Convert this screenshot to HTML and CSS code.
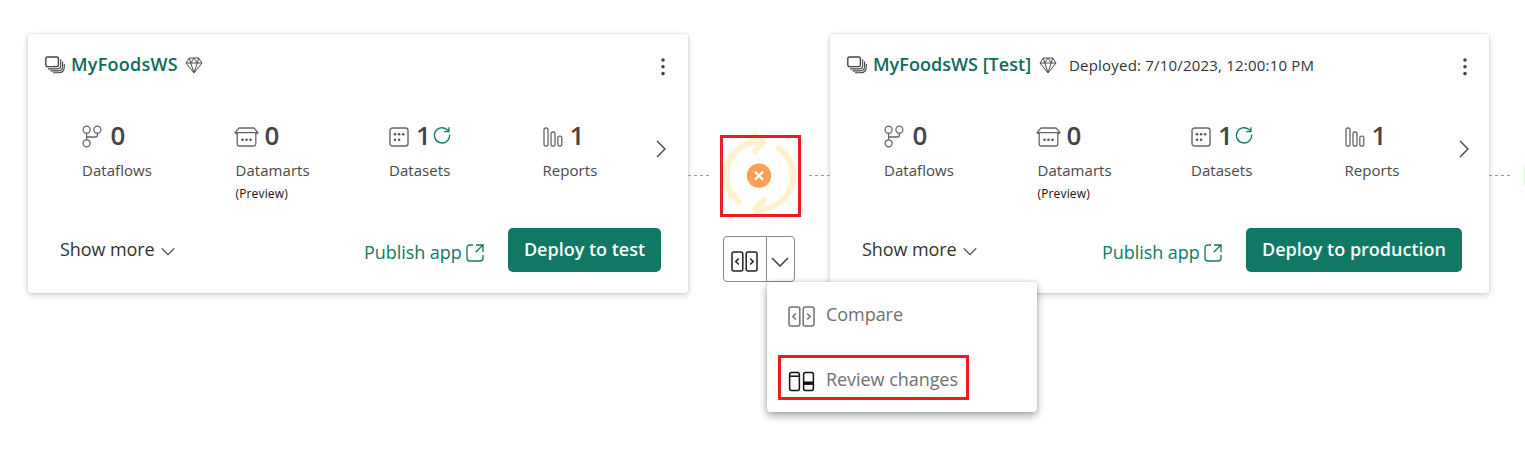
FILE: index.html
```html
<!DOCTYPE html>
<html lang="en">
<head>
<meta charset="utf-8">
<title>Deployment pipeline</title>
<link rel="stylesheet" href="styles.css">
</head>
<body>
<svg class="sprite" aria-hidden="true">
  <symbol id="i-stack" viewBox="0 0 20 18"><g fill="none" stroke="#444" stroke-width="1.4"><rect x=".8" y="1" width="12.6" height="9.6" rx="1.5"/><path d="M3 12.9h9.4q3.3 0 3.3-3.3V3.300M5.400 14.900h7.600q4.600 0 4.600-4.600V5.600M8 16.800h5.400q5.900 0 5.900-6V8" stroke-width="1.100"/></g></symbol>
  <symbol id="i-gem" viewBox="0 0 18 17"><path d="M4.400 1h9.200L17 6 9 16 1 6zM1 6h16M9 1.200 5.700 6 9 15.500 12.300 6zM4.400 1 5.700 6M13.600 1 12.300 6" fill="none" stroke="#4c4c4c" stroke-width="1" stroke-linejoin="round"/></symbol>
  <symbol id="i-more" viewBox="0 0 6 20"><g fill="#444"><circle cx="3" cy="3" r="1.8"/><circle cx="3" cy="9.8" r="1.8"/><circle cx="3" cy="16.6" r="1.8"/></g></symbol>
  <symbol id="i-flow" viewBox="0 0 20 23"><g fill="none" stroke="#666" stroke-width="1.3"><circle cx="4.6" cy="4.7" r="3.5"/><circle cx="15.4" cy="4.7" r="3.5"/><circle cx="4.6" cy="18.3" r="3.5"/><path d="M4.6 8.2v6.6M4.6 12h8.8q2 0 2-2V8.2"/></g></symbol>
  <symbol id="i-mart" viewBox="0 0 25 20"><path d="M5 1h15l4 4.6H1zM3.2 5.8v11q0 2.2 2.2 2.2h14.2q2.2 0 2.2-2.2v-11M1 5.6q.4 1.2 2.2 1.2M24 5.6q-.4 1.2-2.2 1.2" fill="none" stroke="#666" stroke-width="1.3" stroke-linejoin="round"/><g fill="#555"><circle cx="8.5" cy="12.8" r="1.3"/><circle cx="12.5" cy="12.8" r="1.3"/><circle cx="16.5" cy="12.8" r="1.3"/></g></symbol>
  <symbol id="i-set" viewBox="0 0 20 20"><rect x="1" y="1" width="18" height="18" rx="2.5" fill="none" stroke="#666" stroke-width="1.4"/><g fill="#555"><circle cx="6" cy="7.3" r="1.3"/><circle cx="10.1" cy="7.3" r="1.3"/><circle cx="14.2" cy="7.3" r="1.3"/><circle cx="6" cy="12.8" r="1.3"/><circle cx="10.1" cy="12.8" r="1.3"/></g></symbol>
  <symbol id="i-bars" viewBox="0 0 20 20"><g fill="none" stroke="#666" stroke-width="1.3"><rect x="1" y="1" width="4" height="18" rx="1.6"/><rect x="8" y="5" width="4" height="14" rx="1.6"/><rect x="14.8" y="9.2" width="4" height="9.8" rx="1.6"/></g></symbol>
  <symbol id="i-refresh" viewBox="0 0 18 18"><path d="M16.6 8.6a7.6 7.6 0 1 1-2.6-5L16 5.4M15.9 1.2v4.5h-4.7" fill="none" stroke="#117865" stroke-width="1.3"/></symbol>
  <symbol id="i-right" viewBox="0 0 10 18"><path d="M1 1l8 8-8 8" fill="none" stroke="#444" stroke-width="1.4"/></symbol>
  <symbol id="i-down" viewBox="0 0 18 10"><path d="M1 1l8 8 8-8" fill="none" stroke="#444" stroke-width="1.6"/></symbol>
  <symbol id="i-open" viewBox="0 0 18 18"><path d="M7 1H4Q1 1 1 4v10q0 3 3 3h10q3 0 3-3v-3M10 1h7v7M17 1l-7.3 7.3" fill="none" stroke="#117865" stroke-width="1.3"/></symbol>
  <symbol id="i-compare" viewBox="0 0 27 21"><g fill="none" stroke="currentColor" stroke-width="1.5"><rect x="1" y="1" width="10.8" height="19" rx="2"/><rect x="15.2" y="1" width="10.8" height="19" rx="2"/><path d="M7.8 7.4 4.8 10.5l3 3.1M19.2 7.4l3 3.1-3 3.1"/></g></symbol>
  <symbol id="i-review" viewBox="0 0 27 21"><g fill="none" stroke="#111" stroke-width="1.5"><rect x="1.6" y="1.6" width="9.8" height="17.8" rx="2"/><rect x="15.6" y="1.6" width="9.8" height="17.8" rx="2"/><path d="M1.6 5.2h9.8"/><path d="M15.6 12.2h9.8" stroke-width="3.4"/></g></symbol>
</svg>

<main class="pipeline">
  <section class="card">
    <header class="card-head">
      <svg class="stack"><use href="#i-stack"/></svg>
      <h2 class="name name-short">MyFoodsWS</h2>
      <svg class="gem"><use href="#i-gem"/></svg>
      <svg class="more"><use href="#i-more"/></svg>
    </header>
    <div class="stats">
      <div class="stat"><div class="count"><svg class="flow"><use href="#i-flow"/></svg><b>0</b></div><p class="label">Dataflows</p></div>
      <div class="stat"><div class="count"><svg class="mart"><use href="#i-mart"/></svg><b>0</b></div><p class="label">Datamarts</p><small class="note">(Preview)</small></div>
      <div class="stat"><div class="count"><svg class="sq"><use href="#i-set"/></svg><b class="one">1</b><svg class="refresh"><use href="#i-refresh"/></svg></div><p class="label">Datasets</p></div>
      <div class="stat"><div class="count"><svg class="sq"><use href="#i-bars"/></svg><b class="one">1</b></div><p class="label">Reports</p></div>
      <svg class="next"><use href="#i-right"/></svg>
    </div>
    <footer class="card-foot">
      <span class="show">Show more</span><svg class="show-icon"><use href="#i-down"/></svg>
      <a class="publish">Publish app</a><svg class="open"><use href="#i-open"/></svg>
      <button class="deploy deploy-test">Deploy to test</button>
    </footer>
  </section>

  <div class="between">
    <div class="sync-row">
      <span class="dash"></span>
      <div class="sync">
        <svg class="sync-icon" viewBox="-50 -44 100 88">
          <g fill="none" stroke="#fff2cc" stroke-width="6" stroke-linecap="round" stroke-linejoin="round">
            <path d="M-20 27A33.5 33.5 0 0 1 4-33M-4-40.500 4-33-4-24"/>
            <path d="M20-26.500A33.5 33.5 0 0 1-4 34M4.500 26-4 34 4.500 40.500"/>
          </g>
          <circle r="12.200" cy=".7" fill="#ff9f57"/>
          <path d="M-4-3.300l8 8m0-8l-8 8" stroke="#fff" stroke-width="2.200"/>
        </svg>
        <span class="mark mark-sync"></span>
      </div>
      <span class="dash"></span>
    </div>
    <div class="split">
      <span class="split-main"><svg class="pair"><use href="#i-compare"/></svg></span>
      <span class="split-menu"><svg class="split-down"><use href="#i-down"/></svg></span>
      <div class="menu">
        <div class="item"><svg class="pair"><use href="#i-compare"/></svg><span>Compare</span></div>
        <div class="item item-review"><svg class="pair"><use href="#i-review"/></svg><span>Review changes</span></div>
      </div>
    </div>
  </div>

  <section class="card card-test">
    <header class="card-head">
      <svg class="stack"><use href="#i-stack"/></svg>
      <h2 class="name name-long">MyFoodsWS [Test]</h2>
      <svg class="gem"><use href="#i-gem"/></svg>
      <span class="date">Deployed: 7/10/2023, 12:00:10 PM</span>
      <svg class="more"><use href="#i-more"/></svg>
    </header>
    <div class="stats">
      <div class="stat"><div class="count"><svg class="flow"><use href="#i-flow"/></svg><b>0</b></div><p class="label">Dataflows</p></div>
      <div class="stat"><div class="count"><svg class="mart"><use href="#i-mart"/></svg><b>0</b></div><p class="label">Datamarts</p><small class="note">(Preview)</small></div>
      <div class="stat"><div class="count"><svg class="sq"><use href="#i-set"/></svg><b class="one">1</b><svg class="refresh"><use href="#i-refresh"/></svg></div><p class="label">Datasets</p></div>
      <div class="stat"><div class="count"><svg class="sq"><use href="#i-bars"/></svg><b class="one">1</b></div><p class="label">Reports</p></div>
      <svg class="next"><use href="#i-right"/></svg>
    </div>
    <footer class="card-foot">
      <span class="show">Show more</span><svg class="show-icon"><use href="#i-down"/></svg>
      <a class="publish">Publish app</a><svg class="open"><use href="#i-open"/></svg>
      <button class="deploy deploy-prod">Deploy to production</button>
    </footer>
  </section>

  <div class="after"><span class="dash"></span><span class="ready"></span></div>
</main>
</body>
</html>
```
FILE: styles.css
```css
* { box-sizing: border-box; }
body { margin: 0; background: #fff; color: #333; font-family: "Open Sans", "Noto Sans", sans-serif; overflow: hidden; }
svg { display: block; flex: none; }
h2, p { margin: 0; }
span, a, h2, p, small, b { white-space: nowrap; }
.sprite { position: absolute; width: 0; height: 0; }

.pipeline { display: flex; height: 461px; padding: 34px 0 0 28px; align-items: flex-start; overflow: hidden; }
.card { flex: none; width: 660px; height: 259px; border-radius: 3px; background: #fff; box-shadow: 0 2px 6px rgba(0, 0, 0, .2), 0 0 2px rgba(0, 0, 0, .14); }
.card-test { width: 659px; }

.card-head { display: flex; align-items: center; height: 62px; padding: 0 22px 0 17px; }
.card-test .card-head { padding-right: 21px; }
.stack { width: 20px; height: 18px; }
.name { margin: -2px 0 0 6px; font-size: 18px; line-height: 24px; font-weight: 600; color: #0f6b5a; }
.name-short { width: 107px; letter-spacing: .25px; }
.name-long { width: 158px; letter-spacing: .03px; }
.gem { width: 18px; height: 17px; margin-left: 7px; }
.card-test .gem { margin-left: 8px; }
.date { margin-left: 12px; font-size: 15px; line-height: 20px; letter-spacing: .2px; }
.more { width: 6px; height: 20px; margin: 3px 0 0 auto; }

.stats { display: grid; grid-template-columns: repeat(3, 153.5px) 104px auto; padding: 21px 22px 0 54px; height: 132px; }
.card-test .stats { padding-right: 20px; }
.count { display: flex; align-items: center; height: 36px; }
.count b { margin-left: 8.5px; font-size: 26px; line-height: 36px; font-weight: 600; color: #444; }
.count .one { margin-left: 7px; }
.flow { width: 20px; height: 23px; margin-top: 3px; }
.mart { width: 25px; height: 20px; margin: 3px -3px 0 -1.5px; }
.sq { width: 20px; height: 20px; margin-top: 4px; }
.refresh { width: 18px; height: 18px; margin-left: 2px; }
.label { font-size: 15px; line-height: 22px; color: #484848; margin-top: 6px; letter-spacing: .05px; }
.note { display: block; font-size: 12px; line-height: 16px; margin-top: 5px; color: #111; letter-spacing: .15px; }
.next { width: 10px; height: 18px; margin: 23px 0 0 auto; justify-self: end; }

.card-foot { display: flex; align-items: center; height: 44px; padding: 0 27px 0 32px; }
.show { margin-top: -2px; font-size: 18px; line-height: 24px; width: 96px; letter-spacing: -.08px; }
.show-icon { width: 14px; height: 9px; margin: 3px 0 0 5px; }
.publish { margin: 3px 0 0 auto; width: 98px; font-size: 18px; line-height: 24px; color: #117865; letter-spacing: -.05px; }
.open { width: 18px; height: 18px; margin: 5px 24px 0 4px; }
.deploy { flex: none; height: 44px; padding: 0 0 2px; border: 0; border-radius: 5px; background: #117865; color: #fff; font: 600 18px/24px "Open Sans", "Noto Sans", sans-serif; white-space: nowrap; }
.deploy-test { width: 153px; }
.deploy-prod { width: 216px; }

.between { flex: none; width: 142px; padding-top: 97px; position: relative; z-index: 1; }
.sync-row { display: flex; align-items: center; }
.sync { position: relative; width: 100px; height: 88px; }
.sync-icon { width: 100px; height: 88px; }
.mark-sync { position: absolute; left: 11px; top: 4px; width: 81px; height: 82px; border: 3px solid #ed1c24; }
.dash { flex: none; width: 21px; height: 1px; background: repeating-linear-gradient(90deg, #999 0 3px, transparent 3px 6px); }

.split { position: relative; display: flex; width: 72px; height: 46px; margin: 17px 0 0 35px; border: 1px solid #8a8a8a; border-radius: 4px; color: #222; }
.split-main { display: flex; align-items: center; justify-content: center; width: 43px; padding: 5px 2px 0 0; border-right: 1px solid #8a8a8a; }
.split-menu { display: flex; align-items: center; justify-content: center; flex: 1; padding: 5px 1px 0 0; }
.split-down { width: 18px; height: 10px; }
.pair { width: 27px; height: 21px; }

.menu { position: absolute; left: 43px; top: 45px; width: 270px; height: 130px; padding: 9px 11px; background: #fff; border-radius: 4px; box-shadow: 0 4px 9px rgba(0, 0, 0, .32), 0 0 4px rgba(0, 0, 0, .16); }
.item { display: flex; align-items: center; gap: 11px; width: 191px; height: 45px; padding: 5px 0 0 10px; font-size: 18px; line-height: 24px; color: #707070; letter-spacing: -.05px; }
.item span { margin-top: -4px; }
.item-review { margin-top: 19px; padding: 7px 0 0 7px; border: 3px solid #ed1c24; }

.after { display: flex; align-items: center; justify-content: space-between; width: 36px; height: 22px; margin-top: 130px; }
.ready { width: 1px; height: 20px; background: #dff6dd; }
```
